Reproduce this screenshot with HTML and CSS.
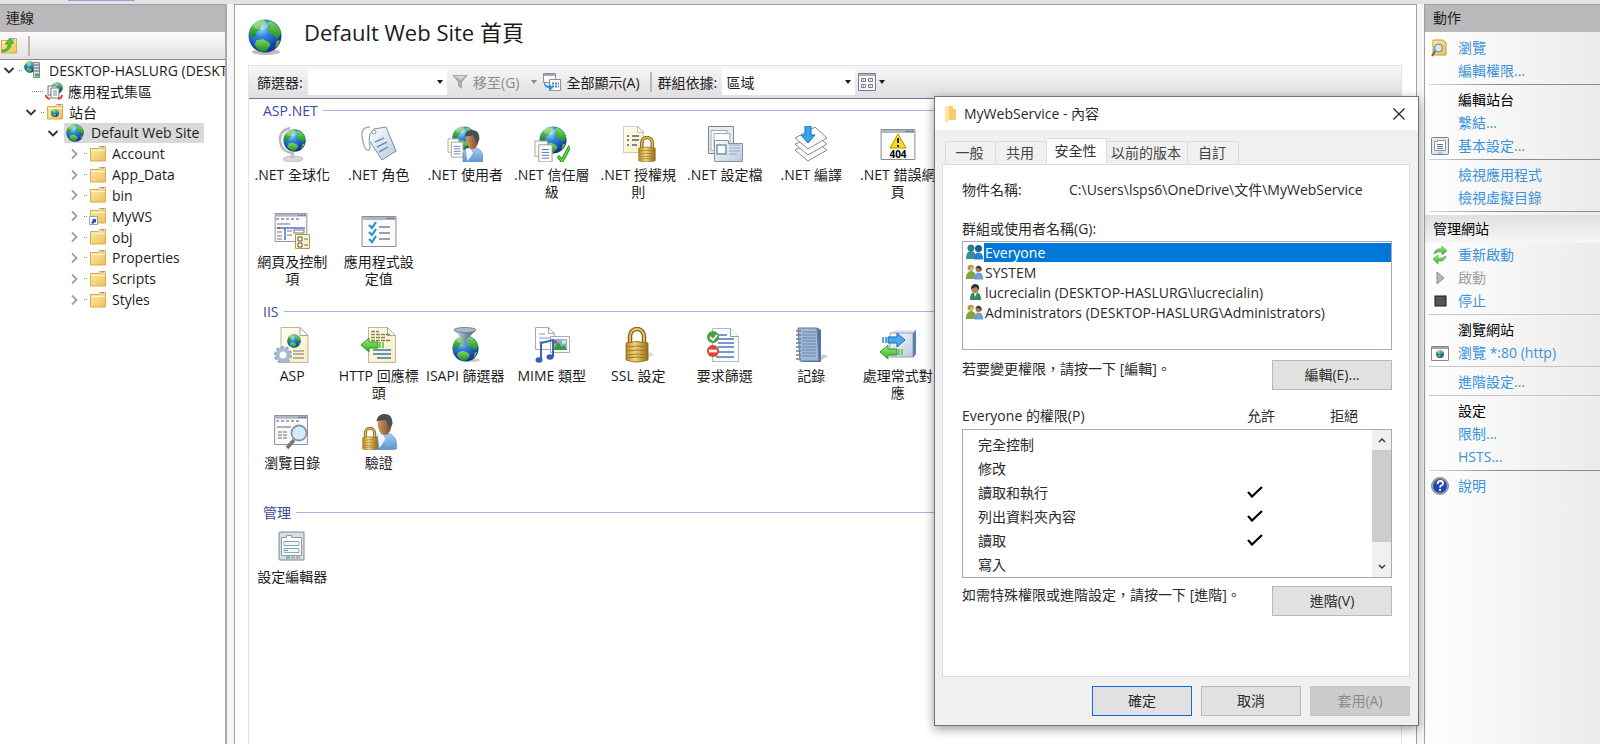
FILE: index.html
```html
<!DOCTYPE html>
<html lang="zh-Hant">
<head>
<meta charset="utf-8">
<title>Default Web Site 首頁</title>
<link rel="stylesheet" href="styles.css">
</head>
<body>
<svg class="defs" aria-hidden="true">
  <defs>
    <radialGradient id="sea" cx=".38" cy=".25" r=".8"><stop offset="0" stop-color="#9fe4fb"/><stop offset=".35" stop-color="#2f86dd"/><stop offset=".8" stop-color="#1a3fae"/><stop offset="1" stop-color="#122a80"/></radialGradient>
    <linearGradient id="land" x2="0" y2="1"><stop offset="0" stop-color="#7fdc56"/><stop offset="1" stop-color="#178a22"/></linearGradient>
    <linearGradient id="fold" x2="1" y2="1"><stop offset="0" stop-color="#ffeaa6"/><stop offset="1" stop-color="#ecc25c"/></linearGradient>
    <linearGradient id="gold" x2="1"><stop offset="0" stop-color="#b98a22"/><stop offset=".4" stop-color="#f3d783"/><stop offset="1" stop-color="#9a6c12"/></linearGradient>
    <linearGradient id="cloth" x2="0" y2="1"><stop offset="0" stop-color="#a9cdee"/><stop offset="1" stop-color="#5c92cf"/></linearGradient>
    <linearGradient id="skin" x2="1"><stop offset="0" stop-color="#d09a64"/><stop offset="1" stop-color="#7a4a28"/></linearGradient>
    <linearGradient id="steel" x2="1" y2="1"><stop offset="0" stop-color="#fff"/><stop offset="1" stop-color="#b9c9dc"/></linearGradient>
    <linearGradient id="cream" x2="1" y2="1"><stop offset="0" stop-color="#fffef2"/><stop offset="1" stop-color="#f8edc0"/></linearGradient>
    <linearGradient id="cone" x2="1"><stop offset="0" stop-color="#dfe9ef"/><stop offset=".5" stop-color="#8196a5"/><stop offset="1" stop-color="#46586a"/></linearGradient>
    <linearGradient id="green" x2="0" y2="1"><stop offset="0" stop-color="#a4ee7c"/><stop offset="1" stop-color="#2fae22"/></linearGradient>
    <symbol id="globe" viewBox="0 0 32 32">
      <circle cx="16" cy="16" r="15.500" fill="url(#sea)"/>
      <path d="M2 11C4 5 9 1 15 1l2 2-4 3-1 4-4 2-1 4-3 1-3-1z" fill="url(#land)"/>
      <path d="M20 2c5 1 9 5 11 10l-1 4-3 3-3-4-4-2-2-4 3-2-3-3z" fill="url(#land)"/>
      <path d="M8 20l6-1 6 3 1 3-4 5-5 1-4-4-2-3z" fill="url(#land)"/>
      <path d="M27 21l3-1-2 5-3 3z" fill="url(#land)"/>
      <ellipse cx="12" cy="6" rx="7" ry="4" fill="#fff" opacity=".3"/>
    </symbol>
    <symbol id="folder" viewBox="0 0 18 18">
      <path d="M1.500 3.500h8l1-2h6v14.500h-15z" fill="url(#fold)" stroke="#d9ac4c"/>
      <path d="M11 2.500h5M2 5.500h14" stroke="#fff7d8"/><path d="M12 2h3" stroke="#5b8ad0"/>
    </symbol>
    <symbol id="lock" viewBox="0 0 24 36">
      <path d="M5 17V9a7 7 0 0 1 14 0v8" fill="none" stroke="#8a6414" stroke-width="4.500"/>
      <path d="M5 17V9a7 7 0 0 1 14 0v8" fill="none" stroke="#e6c670" stroke-width="1.800"/>
      <path d="M1 16q11-3 22 0v17q-11 4-22 0z" fill="url(#gold)" stroke="#8d6415" stroke-width=".8"/>
      <path d="M2 20q10-2 20 0M2 24q10-2 20 0M2 28q10-2 20 0M2 31q10-2 20 0" fill="none" stroke="#9c731f" stroke-width=".9"/>
    </symbol>
    <symbol id="person" viewBox="0 0 24 36">
      <path d="M1 35V27c1-6 6-8 11-8 7 0 11 5 11 12v4q-11 2-22 0z" fill="url(#cloth)" stroke="#5583b4" stroke-width=".6"/>
      <path d="M4 20l5 0 3 5-6 9z" fill="#eef5fc"/>
      <path d="M4 8c0-5 3-7 7-7s7 3 7 9c0 6-3 11-7 11S4 15 4 8z" fill="url(#skin)"/>
      <path d="M3 7c1-5 4-7 8-7 6 0 8 4 8 10l-3 5-2-6-2-3z" fill="#4a4e52"/>
    </symbol>
    <symbol id="page" viewBox="0 0 28 36">
      <path d="M.5.500h19l8 8v27H.500z" fill="url(#cream)" stroke="#b9b7a4"/>
      <path d="M19.500.500v8h8z" fill="#fff" stroke="#a5a5a5"/>
    </symbol>
    <symbol id="papers" viewBox="0 0 20 24">
      <path d="M1 1h13v16H1z" fill="#fdfbee" stroke="#a7a594"/><path d="M5 5h14v18H5z" fill="#fff" stroke="#98988e"/>
      <path d="M8 10h8M8 13h8M8 16h8M8 19h8" stroke="#4d74b4"/>
    </symbol>
    <symbol id="window" viewBox="0 0 36 32">
      <path d="M.5.500h35v31H.500z" fill="#fbfbfb" stroke="#84888f"/><path d="M1 1h34v3H1z" fill="#aeb6c4"/><path d="M26 2.500h2m1 0h2m1 0h2" stroke="#46536b"/>
    </symbol>
    <symbol id="pair" viewBox="0 0 18 16">
      <circle cx="5" cy="4" r="3" fill="#d8b878"/><path d="M1.500 5C1 0 8 0 8 4L5 2 3 6z" fill="#b58d3a"/><path d="M0 15q0-8 5-8t5 8z" fill="#7fa83f"/>
      <circle cx="12.500" cy="5" r="3" fill="#a8744a"/><path d="M9.500 4q3-5 6 0v3l-3-3z" fill="#3d4145"/><path d="M8 15.500q0-7 4.500-7t5 7z" fill="#6f9fd6"/>
    </symbol>
    <symbol id="chev-open" viewBox="0 0 12 12"><path d="M1.500 4L6 8.500 10.500 4" fill="none" stroke="#333" stroke-width="1.800"/></symbol>
    <symbol id="chev" viewBox="0 0 12 12"><path d="M4 1.500L8.500 6 4 10.500" fill="none" stroke="#a0a0a0" stroke-width="1.800"/></symbol>
    <symbol id="caret" viewBox="0 0 6 4"><path d="M0 0h6L3 4z" fill="currentColor"/></symbol>
    <symbol id="tick" viewBox="0 0 16 12"><path d="M1 6l4 4.500L15 1" fill="none" stroke="#000" stroke-width="2.200"/></symbol>
    <symbol id="settings" viewBox="0 0 18 18">
      <rect x=".5" y=".5" width="17" height="17" rx="1" fill="#e3e7ec" stroke="#7b8087"/><path d="M3.500 4.500h3v-1h8v10h-11z" fill="#fff" stroke="#8f959e"/>
      <path d="M6 7.500h6M6 9.500h6M6 11.500h6" stroke="#5c7290"/><path d="M7 16h4" stroke="#39b6ea"/>
    </symbol>
  </defs>
</svg>

<div class="strip"><span class="strip-mark"></span></div>
<div class="workspace">
  <aside class="connections">
    <h2 class="pane-title">連線</h2>
    <div class="mini-bar">
      <button class="icon-button" aria-label="上一層"><svg width="18" height="18" viewBox="0 0 18 18"><use href="#folder"/><path d="M2 13c5 0 6-3 6-6l-3 0 5-6 4 5-3 1c0 5-4 8-9 8z" fill="#4fc22f" stroke="#2f8b1c" stroke-width=".6"/></svg></button>
      <span class="divider"></span>
    </div>
    <ul class="tree">
      <li class="node"><svg class="chevron"><use href="#chev-open"/></svg><span class="dots"></span><svg width="18" height="18" viewBox="0 0 18 18"><use href="#globe" x="0" y="0" width="12" height="12"/><path d="M9.500 1.500h6v15h-6z" fill="#d8dde3" stroke="#7f8891"/><path d="M10 4h5M10 7h5M10 10h5" stroke="#59636d"/><path d="M11 14h4" stroke="#37b34a" stroke-width="3"/></svg><span class="name">DESKTOP-HASLURG (DESKTOP)</span></li>
      <li class="node depth-pool"><span class="dots long"></span><svg width="18" height="18" viewBox="0 0 18 18"><use href="#globe" x="6" y="0" width="12" height="12"/><path d="M3 4h9v9H3z" fill="#f4f4f4" stroke="#777"/><path d="M6 6h8v10H6z" fill="#fff" stroke="#777"/><path d="M8 9h4M8 11h4M8 13h4" stroke="#889"/><path d="M1 13q0 3 4 4M17 13q0 3-4 4" fill="none" stroke="#d04a35" stroke-width="2"/></svg><span class="name">應用程式集區</span></li>
      <li class="node depth-1"><svg class="chevron"><use href="#chev-open"/></svg><span class="dots"></span><svg width="18" height="18" viewBox="0 0 18 18"><use href="#folder"/><use href="#globe" x="5" y="6" width="8" height="8"/></svg><span class="name">站台</span></li>
      <li class="node depth-2"><svg class="chevron"><use href="#chev-open"/></svg><span class="picked"><svg width="18" height="18"><use href="#globe"/></svg><span class="name">Default Web Site</span></span></li>
      <li class="node depth-3"><svg class="chevron"><use href="#chev"/></svg><span class="dots"></span><svg width="18" height="18"><use href="#folder"/></svg><span class="name">Account</span></li>
      <li class="node depth-3"><svg class="chevron"><use href="#chev"/></svg><span class="dots"></span><svg width="18" height="18"><use href="#folder"/></svg><span class="name">App_Data</span></li>
      <li class="node depth-3"><svg class="chevron"><use href="#chev"/></svg><span class="dots"></span><svg width="18" height="18"><use href="#folder"/></svg><span class="name">bin</span></li>
      <li class="node depth-3"><svg class="chevron"><use href="#chev"/></svg><span class="dots"></span><svg width="18" height="18" viewBox="0 0 18 18"><use href="#folder"/><path d="M.5 9.500h8v8h-8z" fill="#fff" stroke="#8fa3c8"/><path d="M2 16l2-3-1-1h4v4l-1-1-2 2z" fill="#2f55a8"/></svg><span class="name">MyWS</span></li>
      <li class="node depth-3"><svg class="chevron"><use href="#chev"/></svg><span class="dots"></span><svg width="18" height="18"><use href="#folder"/></svg><span class="name">obj</span></li>
      <li class="node depth-3"><svg class="chevron"><use href="#chev"/></svg><span class="dots"></span><svg width="18" height="18"><use href="#folder"/></svg><span class="name">Properties</span></li>
      <li class="node depth-3"><svg class="chevron"><use href="#chev"/></svg><span class="dots"></span><svg width="18" height="18"><use href="#folder"/></svg><span class="name">Scripts</span></li>
      <li class="node depth-3"><svg class="chevron"><use href="#chev"/></svg><span class="dots"></span><svg width="18" height="18"><use href="#folder"/></svg><span class="name">Styles</span></li>
    </ul>
  </aside>

  <main class="home">
    <header class="home-head">
      <svg width="34" height="36" viewBox="0 0 34 36"><ellipse cx="18" cy="33" rx="14" ry="3" fill="#bbb"/><use href="#globe" width="34" height="34"/></svg>
      <h1 class="home-title">Default Web Site 首頁</h1>
    </header>
    <div class="content">
      <div class="toolbar">
        <label class="tool-label" for="filter">篩選器:</label>
        <div class="combo"><input id="filter" class="field" type="text"><svg class="combo-caret"><use href="#caret"/></svg></div>
        <button class="tool go" disabled><svg width="16" height="16" viewBox="0 0 16 16"><path d="M0 1h16l-6 7v7l-4-3V8z" fill="#a9a9a9"/><path d="M2 2h11l-4 4z" fill="#d5d5d5"/></svg>移至(G)<svg class="small-caret"><use href="#caret"/></svg></button>
        <button class="tool show-all"><svg width="18" height="18" viewBox="0 0 18 18"><path d="M.5.500h12v9H.500z" fill="#fff" stroke="#8a9099"/><path d="M1 2h11" stroke="#9aa7bb" stroke-width="2"/><path d="M6.500 6.500h11v11h-11z" fill="#fff" stroke="#8a9099"/><path d="M9 10.500h2m1 0h2m1 0h1M9 13.500h2m1 0h2m1 0h1" stroke="#5577aa" stroke-width="2"/><path d="M1 8q1 5 5 5v-3l4 5-4 3v-3Q0 15 1 8z" fill="#2e93d8"/></svg>全部顯示(A)</button>
        <span class="divider"></span>
        <label class="tool-label" for="group">群組依據:</label>
        <div class="combo wide"><select id="group" class="field"><option>區域</option></select><svg class="combo-caret"><use href="#caret"/></svg></div>
        <button class="tool view" aria-label="檢視"><svg width="18" height="18" viewBox="0 0 18 18"><path d="M.5.500h17v17H.500z" fill="#f7f7f7" stroke="#7a7e86"/><path d="M1 2h16" stroke="#a9b1be" stroke-width="2"/><path d="M3.500 5.500h4v3h-4zM10.500 5.500h4v3h-4zM3.500 11.500h4v3h-4zM10.500 11.500h4v3h-4z" fill="#fff" stroke="#6f7f9c"/><path d="M5 7h1m6 0h1" stroke="#4a9a3c"/><path d="M5 13h1" stroke="#5555dd"/><path d="M12 13h1" stroke="#dd5533"/></svg><svg class="small-caret"><use href="#caret"/></svg></button>
      </div>

      <section class="group">
        <h2 class="group-title">ASP.NET</h2>
        <ul class="tiles">
          <li class="tile"><svg class="tile-icon" viewBox="0 0 36 36"><path d="M16 2Q5 5 6 15q1 10 11 12" fill="none" stroke="#b5b9bd" stroke-width="2.500"/><ellipse cx="19" cy="33" rx="10" ry="3" fill="#d8d8d8" stroke="#aaa" stroke-width=".6"/><path d="M17 26h3v6h-3z" fill="#c2c2c2"/><use href="#globe" x="9" y="3" width="23" height="23"/></svg>.NET 全球化</li>
          <li class="tile"><svg class="tile-icon" viewBox="0 0 36 36"><path d="M9 1q-9 0-8 9c1 8 3 14 6 14 3 1 2-5 1-8" fill="none" stroke="#aaaeb4" stroke-width="1.500"/><path d="M9 8l4-5 12-2 10 24-14 9L8 14z" fill="url(#steel)" stroke="#6e93ae"/><circle cx="13" cy="6" r="2" fill="#fff" stroke="#999"/><path d="M14 16l9-4M16 21l10-5M18 26l9-5" stroke="#7193c2" stroke-width="1.500"/></svg>.NET 角色</li>
          <li class="tile"><svg class="tile-icon" viewBox="0 0 36 36"><use href="#globe" x="5" y="0" width="24" height="24"/><use href="#papers" x="0" y="12" width="17" height="20"/><use href="#person" x="15" y="4" width="22" height="33"/></svg>.NET 使用者</li>
          <li class="tile"><svg class="tile-icon" viewBox="0 0 36 36"><use href="#globe" x="5" y="0" width="28" height="28"/><use href="#papers" x="0" y="14" width="19" height="23"/><path d="M24 30l4 5 8-15" fill="none" stroke="#22a31a" stroke-width="3.500"/><path d="M24 30l4 5 8-15" fill="none" stroke="#6fe04c" stroke-width="1.200"/></svg>.NET 信任層級</li>
          <li class="tile"><svg class="tile-icon" viewBox="0 0 36 36"><use href="#page" x="3" y="0" width="21" height="27"/><path d="M7 10h2m3 0h7M7 14h2m3 0h7M7 19h2m3 0h5" stroke="#55606c" stroke-width="1.500"/><use href="#lock" x="18" y="10" width="18" height="27"/></svg>.NET 授權規則</li>
          <li class="tile"><svg class="tile-icon" viewBox="0 0 36 36"><path d="M1.500.500h25v27h-25z" fill="#e8ebef" stroke="#7d838b"/><path d="M4 4.500h16v20H4z" fill="#fff" stroke="#9aa"/><path d="M7 7.500h16v14H7z" fill="#fff" stroke="#9aa"/><path d="M7.500 14.500h14v3h14v18h-28z" fill="url(#steel)" stroke="#8194ab"/><rect x="10" y="19" width="9" height="9" fill="#fff" stroke="#7591b5" stroke-width="1.500"/><path d="M22 19h11M22 22h11M22 25h11M22 28h8" stroke="#8ea8c8"/></svg>.NET 設定檔</li>
          <li class="tile"><svg class="tile-icon" viewBox="0 0 36 36"><path d="M2 24l20-9 12 9-19 11z" fill="#fafafa" stroke="#8c8c8c"/><path d="M2 18l20-9 12 9-19 11z" fill="#fff" stroke="#8c8c8c"/><path d="M2 12l20-11 12 11-19 11z" fill="#fafafa" stroke="#8c8c8c"/><path d="M12 0h6v9h4l-7 8-7-8h4z" fill="#32a8ea" stroke="#1372b4"/></svg>.NET 編譯</li>
          <li class="tile"><svg class="tile-icon" viewBox="0 0 36 36"><use href="#window" x="0" y="3" width="36" height="31"/><path d="M18 8l8 14H10z" fill="#ffd91f" stroke="#b98f00"/><path d="M18 12v5m0 2v2" stroke="#222" stroke-width="2"/><text x="18" y="32" class="code" text-anchor="middle">404</text></svg>.NET 錯誤網頁</li>
          <li class="tile"><svg class="tile-icon" viewBox="0 0 36 36"><use href="#window" x="0" y="0" width="34" height="29"/><path d="M2 6h3m2 0h3m2 0h3m2 0h3m2 0h3" stroke="#8a8f98" stroke-width="1.500"/><path d="M3 11h13m-13 8h5m-5 4h5m-5 3h5m5-8h5m-5 4h5" stroke="#777"/><path d="M3 15h3" stroke="#e04040" stroke-width="2"/><path d="M6 15h25M11 15v12" stroke="#5072d8" stroke-width="1.500"/><rect x="20" y="17" width="10" height="3" fill="#fff" stroke="#777"/><path d="M21.500 21.500h14v14h-14z" fill="#fff3c4" stroke="#bf9a3d"/><path d="M24 24h4v4h-4zM24 30h4v4h-4z" fill="#fff" stroke="#555"/><path d="M30 26h4M30 32h4" stroke="#4a6fd0"/></svg>網頁及控制項</li>
          <li class="tile"><svg class="tile-icon" viewBox="0 0 36 36"><use href="#window" x="0" y="3" width="36" height="31"/><path d="M8 12l3 3 4-6M8 19l3 3 4-6M8 26l3 3 4-6" fill="none" stroke="#2b93c8" stroke-width="2.200"/><path d="M18 14h11M18 20h11M18 26h11" stroke="#7b7f94" stroke-width="1.500"/></svg>應用程式設定值</li>
        </ul>
      </section>

      <section class="group">
        <h2 class="group-title">IIS</h2>
        <ul class="tiles">
          <li class="tile"><svg class="tile-icon" viewBox="0 0 36 36"><use href="#page" x="6" y="0" width="29" height="36"/><use href="#globe" x="13" y="7" width="14" height="14"/><path d="M19 24h11M19 27h11M19 31h11" stroke="#777"/><circle cx="9" cy="28" r="7.500" fill="none" stroke="#8fa6bf" stroke-width="3" stroke-dasharray="3 1.700"/><circle cx="9" cy="28" r="5.500" fill="#fff" stroke="#a9bccf" stroke-width="4"/></svg>ASP</li>
          <li class="tile"><svg class="tile-icon" viewBox="0 0 36 36"><use href="#page" x="7" y="0" width="28" height="36"/><path d="M10 4.500h8M10 7.500h19M10 10.500h15M10 13.500h19" stroke="#8d8140" stroke-width="1.500" stroke-dasharray="4 1"/><path d="M0 18l8-7v4h9v6H8v4z" fill="url(#green)" stroke="#2d9b20"/><path d="M19 15v6m3-6v6" stroke="#57c43d" stroke-width="1.500"/><path d="M12 23h18M12 27h18M16 31h14" stroke="#3d70b5" stroke-width="1.500"/></svg>HTTP 回應標頭</li>
          <li class="tile"><svg class="tile-icon" viewBox="0 0 36 36"><ellipse cx="24" cy="33" rx="9" ry="2" fill="#ccc"/><use href="#globe" x="5" y="8" width="27" height="27"/><path d="M7 3l8 9v8l5-2v-6l9-9z" fill="url(#cone)"/><ellipse cx="18" cy="3" rx="11" ry="2.500" fill="#a9bac6" stroke="#73879a"/></svg>ISAPI 篩選器</li>
          <li class="tile"><svg class="tile-icon" viewBox="0 0 36 36"><path d="M1.500.500h13l6 6v16h-19z" fill="#fff" stroke="#aaa"/><path d="M14.500.500v6h6" fill="none" stroke="#aaa"/><path d="M5 7h6M5 11h11M5 15h8" stroke="#7e9bc8"/><path d="M16.500 9.500h19v16h-19z" fill="#fff" stroke="#aaa"/><path d="M19 12h14v11H19z" fill="#7fb4f0"/><path d="M19 23l5-8 4 5 2-2 3 5z" fill="#3d9a34"/><circle cx="21" cy="15" r="2" fill="#d8512e"/><circle cx="30" cy="15" r="2" fill="#ffe76a"/><path d="M7 32V16l12-3v17" fill="none" stroke="#3d68b8" stroke-width="2"/><ellipse cx="5" cy="33" rx="3.500" ry="2.800" fill="#355fae"/><ellipse cx="16" cy="30" rx="3.500" ry="2.800" fill="#355fae"/></svg>MIME 類型</li>
          <li class="tile"><svg class="tile-icon" viewBox="0 0 36 36"><path d="M20 34l14-6-4-3-8 3z" fill="#ddd"/><use href="#lock" x="5" y="0" width="24" height="36"/></svg>SSL 設定</li>
          <li class="tile"><svg class="tile-icon" viewBox="0 0 36 36"><path d="M5.500 1.500h18l8 8v25h-26z" fill="#fbfcfe" stroke="#b4b8be"/><path d="M23.500 1.500v8h8" fill="#fff" stroke="#999"/><path d="M11 8h9M11 12h16M11 16h16M11 20h16M11 25h16M9 30h18" stroke="#4c79b8" stroke-width="1.500"/><circle cx="6" cy="10" r="6" fill="#4aa044"/><path d="M3 10l3 3 4-5" fill="none" stroke="#fff" stroke-width="1.800"/><circle cx="6" cy="24" r="6" fill="#e0442a"/><path d="M2 24h8" stroke="#fff" stroke-width="2.800"/></svg>要求篩選</li>
          <li class="tile"><svg class="tile-icon" viewBox="0 0 36 36"><path d="M27 34l8-5-6-2z" fill="#ccc"/><path d="M7 1h18l3 2v32H9z" fill="#53749f"/><path d="M5 1h19l2 33H7z" fill="#9fb8d7" stroke="#60799b"/><path d="M9 5h14M9 8h14M9 11h14M9 14h14M9 17h14M9 20h14M9 23h14M9 26h14M9 29h14" stroke="#6987b0"/><path d="M3 4h5M3 8h5M3 12h5M3 16h5M3 20h5M3 24h5M3 28h5M3 32h5" stroke="#737f8f" stroke-width="1.500"/></svg>記錄</li>
          <li class="tile"><svg class="tile-icon" viewBox="0 0 36 36"><path d="M11 6l4-3h22l-4 4z" fill="#dfe9f6"/><path d="M10 6h23v24H10z" fill="url(#steel)" stroke="#8aa0bb"/><path d="M33 6l3-3v24l-3 4z" fill="#5f7fa6"/><path d="M3 10v6m3-6v6" stroke="#2a86d8" stroke-width="1.500"/><path d="M8 10h9V6l8 7-8 7v-4H8z" fill="#49a9ef" stroke="#1c68b4"/><path d="M0 25l8-7v4h9v6H8v4z" fill="url(#green)" stroke="#2d9b20"/><path d="M19 22v6m3-6v6" stroke="#57c43d" stroke-width="1.500"/></svg>處理常式對應</li>
          <li class="tile"><svg class="tile-icon" viewBox="0 0 36 36"><use href="#window" x="0" y="1" width="34" height="30"/><path d="M2 7h3m2 0h3m2 0h3m2 0h3m2 0h3" stroke="#8a8f98" stroke-width="1.500"/><path d="M3 13h14M4 18h4m1 0h4M4 21h4m1 0h4M4 24h4m1 0h4" stroke="#666"/><path d="M20 26l-7 8" stroke="#777" stroke-width="3.500"/><circle cx="25" cy="19" r="7.500" fill="#d5ebfb" stroke="#8197ad" stroke-width="1.800"/></svg>瀏覽目錄</li>
          <li class="tile"><svg class="tile-icon" viewBox="0 0 36 36"><use href="#person" x="12" y="0" width="25" height="36"/><use href="#lock" x="1" y="13" width="16" height="24"/></svg>驗證</li>
        </ul>
      </section>

      <section class="group">
        <h2 class="group-title">管理</h2>
        <ul class="tiles">
          <li class="tile"><svg class="tile-icon" viewBox="0 0 36 36"><rect x="5" y="4" width="25" height="28" rx="1" fill="#d9dee4" stroke="#7f858d"/><path d="M7.500 9.500h5v-2h5v2h10v18h-20z" fill="#fff" stroke="#9299a3"/><path d="M10 13.500h15v4H10zM10 20.500h15v4H10z" fill="#f4f7fa" stroke="#8aa"/><path d="M11 22.500h3" stroke="#3aaede"/><path d="M12 29.500h4" stroke="#39b6ea" stroke-width="2"/><path d="M17 29.500h4m1 0h4" stroke="#aaa" stroke-width="2"/></svg>設定編輯器</li>
        </ul>
      </section>
    </div>
  </main>

  <aside class="actions">
    <h2 class="pane-title wide">動作</h2>
    <div class="action-list">
      <a class="action" href="#"><svg width="18" height="18" viewBox="0 0 18 18"><path d="M2 1h10l3 3v12H2z" fill="url(#fold)" stroke="#c79a35"/><path d="M5 11l-4 6" stroke="#666" stroke-width="2"/><circle cx="7.500" cy="9" r="4" fill="#cfe8fa" stroke="#67809a"/></svg>瀏覽</a>
      <a class="action" href="#">編輯權限...</a>
      <hr class="rule">
      <h3 class="action heading">編輯站台</h3>
      <a class="action" href="#">繫結...</a>
      <a class="action" href="#"><svg width="18" height="18"><use href="#settings"/></svg>基本設定...</a>
      <hr class="rule">
      <a class="action" href="#">檢視應用程式</a>
      <a class="action" href="#">檢視虛擬目錄</a>
      <hr class="rule">
      <h3 class="band">管理網站</h3>
      <a class="action" href="#"><svg width="18" height="18" viewBox="0 0 18 18"><path d="M3 8q1-6 8-5V0l5 5-5 4V6q-4-1-8 2z" fill="url(#green)" stroke="#3aa52a" stroke-width=".6"/><path d="M15 10q-1 6-8 5v3l-5-5 5-4v3q4 1 8-2z" fill="url(#green)" stroke="#3aa52a" stroke-width=".6"/></svg>重新啟動</a>
      <span class="action off"><svg width="18" height="18" viewBox="0 0 18 18"><path d="M6 3l7 6-7 6z" fill="#b9b9b9" stroke="#8d8d8d"/></svg>啟動</span>
      <a class="action" href="#"><svg width="18" height="18" viewBox="0 0 18 18"><rect x="4" y="4" width="11" height="10" fill="#555" stroke="#1d1d1d"/></svg>停止</a>
      <hr class="rule soft">
      <h3 class="action heading">瀏覽網站</h3>
      <a class="action" href="#"><svg width="18" height="18" viewBox="0 0 18 18"><path d="M.5 2.500h17v14H.500z" fill="#fff" stroke="#868a90"/><path d="M1 4h16" stroke="#9da6b4" stroke-width="2"/><use href="#globe" x="5" y="6" width="8" height="8"/></svg>瀏覽 *:80 (http)</a>
      <hr class="rule soft">
      <a class="action" href="#">進階設定...</a>
      <hr class="rule soft">
      <h3 class="action heading">設定</h3>
      <a class="action" href="#">限制...</a>
      <a class="action" href="#">HSTS...</a>
      <hr class="rule">
      <a class="action" href="#"><svg width="18" height="18" viewBox="0 0 18 18"><circle cx="9" cy="9" r="8.500" fill="#a9adb5" stroke="#70757e" stroke-width=".8"/><circle cx="9" cy="9" r="7" fill="#2348b0"/><path d="M6.500 7q0-3 3-3 2.500 0 2.500 2.200 0 1.300-1.500 2.100T9 10.500M9 12v2" fill="none" stroke="#fff" stroke-width="1.800"/></svg>說明</a>
    </div>
  </aside>
</div>

<div class="dialog" role="dialog" aria-labelledby="dialog-title">
  <header class="dialog-head">
    <svg width="12" height="16" viewBox="0 0 12 16"><path d="M0 0h8v3h3v11H4l-3 2-1-2z" fill="#f6cf68"/><path d="M0 0h4v13l-3 3-1-2z" fill="#ffe7a2"/></svg>
    <h2 id="dialog-title" class="dialog-title">MyWebService - 內容</h2>
    <button class="close" aria-label="關閉"><svg width="12" height="12" viewBox="0 0 12 12"><path d="M.5.500l11 11M11.500.500l-11 11" stroke="#222" stroke-width="1.200"/></svg></button>
  </header>
  <div class="dialog-body">
    <div class="tabs" role="tablist">
      <button class="tab" role="tab">一般</button><button class="tab" role="tab">共用</button><button class="tab active" role="tab" aria-selected="true">安全性</button><button class="tab long" role="tab">以前的版本</button><button class="tab" role="tab">自訂</button>
    </div>
    <div class="sheet">
      <div class="object"><span class="object-key">物件名稱:</span><span>C:\Users\lsps6\OneDrive\文件\MyWebService</span></div>
      <p class="caption" id="names">群組或使用者名稱(G):</p>
      <ul class="people" role="listbox" aria-labelledby="names">
        <li class="who selected" role="option" aria-selected="true"><svg width="18" height="16" viewBox="0 0 18 16"><circle cx="5" cy="4" r="3.500" fill="#2d7f93"/><path d="M0 15q0-8 5-8t5 8z" fill="#35909a"/><circle cx="12.500" cy="4.500" r="3.500" fill="#1d5b8c"/><path d="M8 15.500q0-7 4.500-7t5 7z" fill="#2b7ec9"/></svg><span class="who-name">Everyone</span></li>
        <li class="who" role="option"><svg width="18" height="16"><use href="#pair"/></svg><span class="who-name">SYSTEM</span></li>
        <li class="who" role="option"><svg width="18" height="16" viewBox="0 0 18 16"><path d="M4 16q0-8 5-8 6 0 6 8z" fill="#2f8a5d"/><path d="M8 9l1 4 2-4z" fill="#fff"/><circle cx="9" cy="5" r="3.800" fill="#b88256"/><path d="M5 5q0-5 5-5 4 1 3 6l-3-3z" fill="#2e3133"/></svg><span class="who-name">lucrecialin (DESKTOP-HASLURG\lucrecialin)</span></li>
        <li class="who" role="option"><svg width="18" height="16"><use href="#pair"/></svg><span class="who-name">Administrators (DESKTOP-HASLURG\Administrators)</span></li>
      </ul>
      <div class="hint"><p class="hint-text">若要變更權限，請按一下 [編輯]。</p><button class="push">編輯(E)...</button></div>
      <div class="perm-head"><span>Everyone 的權限(P)</span><span>允許</span><span>拒絕</span></div>
      <div class="perm-box">
        <table class="perms">
          <tr><td class="perm">完全控制</td><td class="mark"></td><td class="mark"></td></tr>
          <tr><td class="perm">修改</td><td class="mark"></td><td class="mark"></td></tr>
          <tr><td class="perm">讀取和執行</td><td class="mark"><svg width="16" height="12"><use href="#tick"/></svg></td><td class="mark"></td></tr>
          <tr><td class="perm">列出資料夾內容</td><td class="mark"><svg width="16" height="12"><use href="#tick"/></svg></td><td class="mark"></td></tr>
          <tr><td class="perm">讀取</td><td class="mark"><svg width="16" height="12"><use href="#tick"/></svg></td><td class="mark"></td></tr>
          <tr><td class="perm">寫入</td><td class="mark"></td><td class="mark"></td></tr>
        </table>
        <div class="scroll">
          <svg class="scroll-arrow" viewBox="0 0 8 6"><path d="M1 5l3-3 3 3" fill="none" stroke="#333" stroke-width="1.400"/></svg>
          <span class="thumb"></span>
          <svg class="scroll-arrow" viewBox="0 0 8 6"><path d="M1 1l3 3 3-3" fill="none" stroke="#333" stroke-width="1.400"/></svg>
        </div>
      </div>
      <div class="hint last"><p class="hint-text">如需特殊權限或進階設定，請按一下 [進階]。</p><button class="push">進階(V)</button></div>
    </div>
    <footer class="dialog-foot"><button class="push primary">確定</button><button class="push">取消</button><button class="push" disabled>套用(A)</button></footer>
  </div>
</div>
</body>
</html>
```
FILE: styles.css
```css
* { box-sizing: border-box; }

body {
  margin: 0;
  height: 100vh;
  overflow: hidden;
  display: flex;
  flex-direction: column;
  background: #f6f5f6;
  color: #1c1c1c;
  font: 14px/17px "Open Sans", "Noto Sans CJK TC", sans-serif;
}

h1, h2, h3, p, ul { margin: 0; padding: 0; font: inherit; }
ul { list-style: none; }
svg { flex: none; display: block; }
button, input, select { font: inherit; color: inherit; }
button { padding: 0; }
.defs { position: absolute; width: 0; height: 0; }

.strip { height: 4px; background: #e4e2e3; padding-left: 68px; }
.strip-mark { display: block; width: 67px; height: 1px; background: #8fa3dc; }

.workspace { flex: 1; min-height: 0; display: flex; gap: 7px; }

.pane-title {
  height: 28px;
  padding-left: 6px;
  line-height: 26px;
  background: #bab8bb;
  border-top: 1px solid #a19fa2;
}
.pane-title.wide { padding-left: 8px; }

/* Connections */
.connections {
  width: 227px;
  overflow: hidden;
  background: #fff;
  border-right: 2px solid #a9a9ab;
}
.mini-bar {
  height: 28px;
  display: flex;
  align-items: center;
  gap: 10px;
  background: linear-gradient(#fbfbfb, #e2e0e2);
  border-bottom: 1px solid #8b899c;
}
.icon-button { border: 0; background: none; }
.divider { width: 2px; height: 20px; background: #bdb9a6; }
.tree { height: 250px; display: grid; grid-auto-rows: 1fr; }
.node { display: flex; align-items: center; padding-left: 3px; white-space: nowrap; }
.depth-1 { padding-left: 25px; }
.depth-pool { padding-left: 32px; }
.depth-2 { padding-left: 47px; }
.depth-3 { padding-left: 68px; }
.chevron { width: 12px; height: 12px; margin-right: 4px; }
.dots { width: 3px; margin-right: 2px; border-top: 1px dotted #888; }
.dots.long { width: 11px; }
.name { padding-left: 5px; }
.node:first-child .name { padding-left: 7px; }
.picked { display: flex; align-items: center; height: 20px; margin-left: 1px; padding: 0 5px 0 2px; background: #d9d9d9; }
.picked .name { padding-left: 7px; }

/* Home pane */
.home {
  flex: 1;
  min-width: 0;
  display: flex;
  flex-direction: column;
  padding: 0 14px 0 13px;
  background: #fff;
  border: 1px solid #a0a0a2;
  border-bottom: 0;
}
.home-head { height: 60px; display: flex; align-items: center; gap: 22px; padding-top: 4px; }
.home-title { font-size: 22px; line-height: 30px; padding-bottom: 10px; }
.content { flex: 1; border: 1px solid #e4e4e4; border-bottom: 0; }
.toolbar {
  height: 33px;
  display: flex;
  align-items: center;
  padding-left: 8px;
  background: linear-gradient(#f7f7f7, #e0dee0);
  border-bottom: 1px solid #77758a;
}
.tool-label { width: 51px; white-space: nowrap; }
.combo { position: relative; width: 139px; height: 26px; background: #fff; }
.combo.wide { width: 133px; }
.field { width: 100%; height: 100%; padding: 0 5px; border: 0; background: none; appearance: none; }
.combo-caret { position: absolute; right: 4px; top: 11px; width: 6px; height: 4px; }
.tool { display: flex; align-items: center; gap: 5px; border: 0; background: none; white-space: nowrap; }
.small-caret { width: 6px; height: 4px; }
.go { color: #8b8b8b; margin-left: 5px; }
.go .small-caret { margin-left: 7px; }
.show-all { margin: 0 10px 0 6px; }
.divider + .tool-label { margin-left: 6px; width: 64px; }
.view { gap: 3px; margin-left: 3px; }

.group { padding-top: 3px; }
.group-title { display: flex; align-items: center; gap: 5px; padding-left: 14px; color: #3b4a9c; }
.group-title::after { content: ""; flex: 1; height: 1px; background: #a3b5dc; }
.tiles {
  max-width: 692px;
  margin-top: 7px;
  display: grid;
  grid-template-columns: repeat(8, 1fr);
  grid-auto-rows: 87px;
}
.tile { display: flex; flex-direction: column; align-items: center; gap: 4px; padding: 0 3px; text-align: center; word-break: break-all; }
.tile-icon { width: 36px; height: 36px; }
.code { font: bold 10px "Open Sans", sans-serif; }

/* Actions */
.actions {
  width: 176px;
  border-left: 1px solid #a0a0a2;
  background: linear-gradient(90deg, #fff, #ebebec);
}
.action-list { padding-top: 4px; }
.action {
  position: relative;
  display: block;
  height: 23px;
  padding-left: 33px;
  line-height: 23px;
  color: #3c93d8;
  text-decoration: none;
}
.action svg { position: absolute; left: 6px; top: 3px; }
.heading { color: #000; }
.off { color: #a0a0a0; }
.band { height: 28px; padding-left: 8px; line-height: 28px; color: #000; background: linear-gradient(#e0e0e1, #f6f6f6); }
.rule { height: 1px; margin: 2px 0 3px 4px; border: 0; background: linear-gradient(90deg, #d8d8d8, #8c8c8c 40%); }
.rule.soft { background: #c6c6c6; }

/* Properties dialog */
.dialog {
  position: absolute;
  left: 934px;
  top: 96px;
  width: 485px;
  color: #2b2b2b;
  background: #f0f0f0;
  border: 1px solid #747474;
  box-shadow: 0 3px 10px rgba(0, 0, 0, .4);
}
.dialog-head { height: 33px; display: flex; align-items: center; gap: 7px; padding: 0 13px 0 10px; background: #fff; }
.dialog-title { flex: 1; }
.close { border: 0; background: none; }
.dialog-body { padding: 8px 8px 9px 7px; }
.tabs { height: 26px; display: flex; align-items: flex-end; padding-left: 3px; }
.tab { width: 51px; height: 23px; padding: 0 2px 2px 0; border: 1px solid #dcdcdc; border-width: 1px 1px 0 0; background: #f0f0f0; color: #444; }
.tab:first-child { border-left-width: 1px; }
.tab.active { width: 60px; height: 26px; background: #fff; color: #333; }
.tab.long { width: 81px; white-space: nowrap; }
.sheet { height: 513px; padding: 16px 17px 0 19px; background: #fff; border: 1px solid #dcdcdc; }
.object { display: flex; }
.object-key { width: 107px; }
.caption { margin-top: 22px; }
.people { height: 109px; margin-top: 4px; border: 1px solid #a8abb2; }
.who { height: 20px; display: flex; align-items: center; padding-left: 3px; }
.who-name { flex: 1; padding-left: 1px; line-height: 19px; }
.selected .who-name { background: #0078d7; color: #fff; }
.hint { display: flex; justify-content: space-between; margin-top: 10px; }
.push { width: 120px; height: 30px; padding-bottom: 2px; border: 1px solid #b8b8b8; background: #e1e1e1; }
.perm-head { display: grid; grid-template-columns: 1fr 83px 62px; margin-top: 17px; }
.perm-box { height: 149px; margin-top: 5px; display: flex; border: 1px solid #a8abb2; }
.perms { flex: 1; border-collapse: collapse; align-self: flex-start; margin-top: 2px; }
.perms td { height: 24px; padding: 0; }
.perms .perm { padding-left: 15px; }
.mark { width: 83px; }
.perms .mark:last-child { width: 42px; }
.scroll { width: 19px; display: flex; flex-direction: column; align-items: center; background: #f0f0f0; }
.scroll-arrow { width: 8px; height: 6px; margin: 7px 0; }
.thumb { width: 19px; height: 92px; margin-bottom: auto; background: #cdcdcd; }
.hint.last { margin-top: 8px; }
.dialog-foot { display: flex; justify-content: flex-end; gap: 9px; margin-top: 9px; }
.dialog-foot .push { width: 100px; }
.push.primary { border-color: #0f6bd0; }
.push:disabled { background: #cccccc; border-color: #c4c4c4; color: #8b8b8b; }
```
